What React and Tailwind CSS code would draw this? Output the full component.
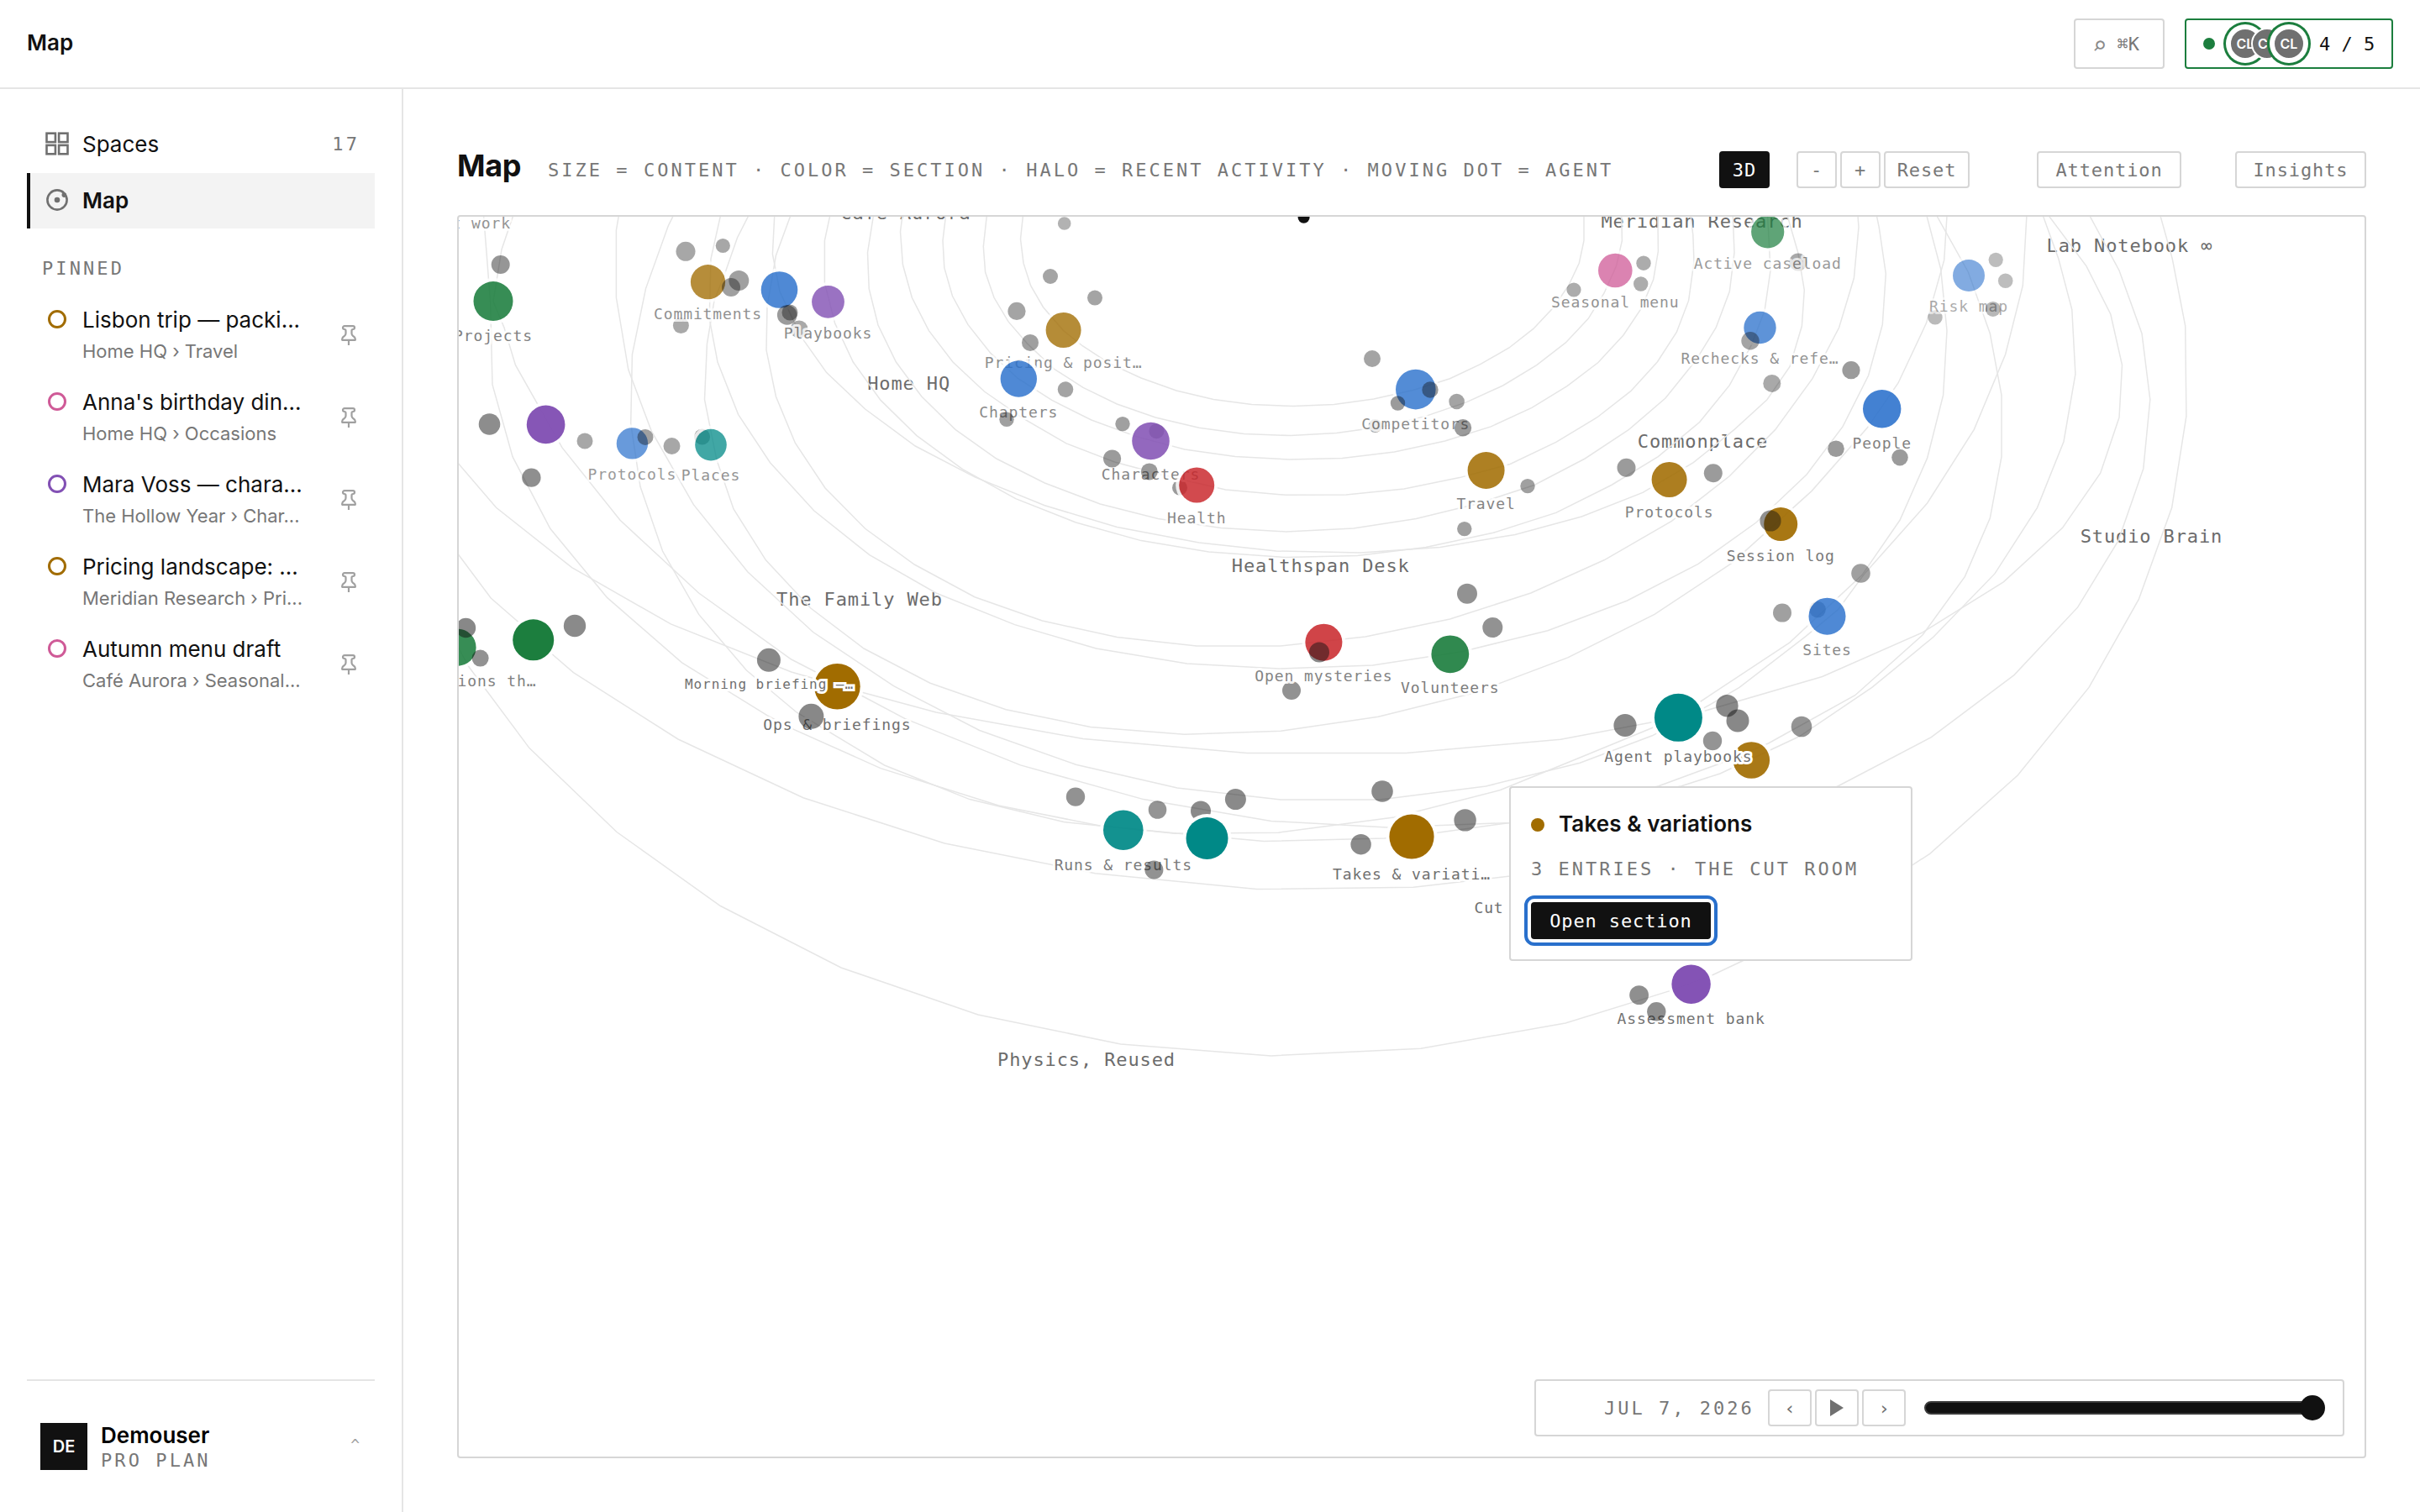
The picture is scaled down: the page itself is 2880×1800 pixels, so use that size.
import { clsx } from "clsx";

const MONO = "font-['DejaVu_Sans_Mono','Liberation_Mono',monospace]";
const SANS = "font-['Inter','Liberation_Sans',sans-serif]";

const AMBER = "#a16c00";
const PINK = "#cf5a97";
const PURPLE = "#8250b4";
const GREEN = "#1c7e3e";
const BLUE = "#2970cc";
const TEAL = "#008987";
const RED = "#c9262b";

const pinned = [
  { title: "Lisbon trip — packi...", path: "Home HQ › Travel", color: AMBER },
  { title: "Anna's birthday din...", path: "Home HQ › Occasions", color: PINK },
  { title: "Mara Voss — chara...", path: "The Hollow Year › Char...", color: PURPLE },
  { title: "Pricing landscape: ...", path: "Meridian Research › Pri...", color: AMBER },
  { title: "Autumn menu draft", path: "Café Aurora › Seasonal...", color: PINK },
];

const orbits = [
  "1217.4,257 1214.5,284.6 1218,313.2 1226.6,340 1241.5,365.7 1265.6,393.6 1288.6,412 1320.7,432.9 1358,450 1400,465 1444.2,475.4 1489.6,481.4 1539,483.6 1587.7,481.4 1634.8,475 1682.5,464.3 1725.5,450.7 1761.7,433.6 1796,414 1824.8,391.4 1849,365.7 1866.7,340 1879.3,313.2 1885,286.4 1885,257",
  "1174.3,257 1170.3,293.6 1172.6,324 1183,354.3 1200,382.9 1223,409.6 1254.7,439.3 1289,461.4 1329.3,481 1375.2,497 1427,509.3 1480.4,516.4 1536,518.6 1590.6,515.4 1645,507.9 1696.8,495.4 1745.6,478.6 1788.6,459 1828.8,434.6 1863.3,407.9 1890.2,379.3 1909,349 1923.5,316.8 1930.4,286.4 1929.8,257",
  "1125.5,257 1122,286.4 1123.8,318.6 1133.5,352.5 1151.9,386.4 1178.9,420.4 1211.6,450.7 1251.8,476.4 1298.8,500 1352.3,519.6 1409.8,535 1470,543.6 1534.3,547 1597.5,545.4 1659.5,537.9 1719.7,525 1774.3,507.9 1823,485.4 1865,459.6 1901.7,431.8 1932,399 1953.4,366.8 1967.7,332.9 1973.4,299 1972.9,257",
  "1073.9,257 1071.5,275.7 1074.4,315 1085.3,354.3 1105.4,393.6 1134,431 1171.4,466 1217.3,497.9 1269,527.9 1326.4,550 1390,567 1458.6,582.9 1530.3,589.3 1602,589 1671,582 1737,568.6 1797.2,552.5 1851.8,526.4 1900.6,497 1940.7,465.7 1972.3,431 1995.3,395.4 2009.6,357.9 2016,311.4 2014.8,279.3 2012,257",
  "1039.4,257 1032.5,300.7 1034.2,343.6 1045,387 1066.4,431 1096.8,472 1137,511.4 1185.8,546 1243.3,575 1309.3,600 1378.2,617.5 1452.8,628.6 1530.3,632.9 1610.7,629 1685.3,617.5 1757,600 1825.9,577.5 1886.2,546 1937.8,512 1982,474 2018,429.3 2042.2,390 2058.3,347 2064,300.7 2062.3,257",
  "987.7,257 981.4,286.4 981.4,336.4 993.5,384.6 1015.3,431 1048,476.4 1091,518.6 1145.6,558.6 1208.7,593.6 1280.5,622 1358,643.6 1438.5,657 1530.3,663.6 1615.3,661.4 1696.8,651.4 1777,634.3 1851.8,610.4 1917.7,577.5 1973.3,543.6 2022.7,502.5 2058.3,458.6 2084,411.4 2100,370 2107,322 2103.6,257",
  "921.7,257 919.4,302.5 928,347 953.3,400.7 983.7,443.6 1029.6,487 1089.3,531 1160,567.9 1243.3,601.8 1329.4,627.5 1427,646 1518.8,656 1619.3,657.9 1714,651.4 1803,636.4 1882.3,615 1955,586.4 2015.3,550.7 2064,511.4 2103,475.7 2130,436.4 2144.4,388 2147.3,345.4 2139.8,300.7 2127.2,257",
  "940.7,257 923.4,304.3 913,365 912,416.8 923.4,472 946.4,527.5 982,581 1029.6,629.3 1088.2,672 1160,710.7 1240.4,739 1329.4,758.6 1424,769 1523.4,769 1625,758 1725.5,737 1821.8,706 1909,666.8 1989.4,620.4 2058.3,566.8 2112.8,511.4 2157,450.7 2188.6,390 2206.4,331 2212,270.4 2211,257",
  "857.4,257 846,308 844.2,379.3 854,431 878.7,493.6 916.5,550.7 968.8,608 1034.8,660.7 1114,706 1207.6,743.6 1304.6,772 1412.5,790 1521.7,796 1633.6,792 1739.8,775.7 1842,750.7 1936.6,715 2021,671.4 2090,622 2150,565 2193,507.9 2223.6,447 2240.3,386.4 2244.3,325.7 2236.2,270.4 2233.4,257",
  "890.7,257 877.5,283 862.6,325.7 850,358 841.4,409.6 838.5,475.7 852.8,547 873,606 911.4,666.8 964.8,724 1028,772 1107,813.2 1197.2,844.7 1297.7,865.4 1409.6,874.3 1524.3,870.2 1640.3,853.2 1754,825 1865.8,782.9 1969,731.4 2061,670.4 2156,584.6 2222,509.6 2259,456 2292.5,384.6 2313.7,309.6 2317,257",
  "575.6,257 583.6,359.6 586,457.9 610,543.6 654.8,629.3 722.5,711.4 811.5,788.8 913,851.7 944.7,868.4 1048,914.6 1188.6,959 1309,983 1400,992 1504.2,1001.6 1647.7,997.9 1711,991.2 1797,979.4 1974,935.7 2044,910 2104.4,885 2207.7,827.7 2288,756 2338.4,686.4 2368.3,616.8 2382,543.6 2382,470.4 2368.3,397 2342.4,324 2305,257",
  "610.6,257 597,297 587,359 600,390 613.5,434.6 669,532.9 738,619.3 831.6,706 941.8,785 1028,829.5 1076.7,855.4 1214.5,910.9 1360.8,951.6 1512.8,977.5 1650.6,985 1797,979.4 1930,950 2001,935.7 2047,921 2141.7,876.5 2227.8,818.4 2300.7,758.5 2374,682.9 2424.5,604.3 2456,525.7 2469.9,445.4 2465.8,368.6 2449.8,307.9 2431.4,257",
  "736.3,257 733.4,274 733.4,354.3 747.8,440 775.3,513.2 825.3,600.7 890,681 967.6,752.5 1063.5,816.6 1165.7,869.5 1280.5,910.2 1401,937.9 1524.3,952 1642,952 1768.3,936 1880.2,908.3 1966.3,875.8 2030,841.7 2070,818.4 2149.2,757.4 2187.5,725.7 2219,682.9 2293.6,599 2349.3,511.4 2386.6,422 2407.3,340 2411.9,257",
  "801.2,257 795.4,268.6 768.5,343.6 752.4,422 750.7,504.3 762,579.3 788.5,656 831.6,731.4 888.4,798 948,848 1052.6,911 1154,951.6 1266,978.6 1398,992.3 1521.4,991.2 1659,973 1785.5,940.5 1880,902 1966.3,866.5 2024,835 2130,764.8 2216,684.6 2261,619.3 2293.6,545.4 2312.6,470.4 2317,393.6 2309.7,320.4 2293,257",
  "544,550 590.5,604.3 680.6,675.7 798.3,742.9 941.8,800 1028,824.7 1114,848 1289,879.5 1484,896.5 1673.6,896.5 1857.2,880.2 1966.3,859.8 2029.8,846 2168.7,805.5 2288,752.9 2384.3,692.9 2454.4,628.6 2499.7,563.2 2522,497 2525.5,434.6 2511.8,374 2483,316.8 2438.3,257",
  "544,658 584.2,712 616.3,740 659.4,780.7 682.4,800.6 807,880 956,949.8 1124.3,1004 1303.4,1039.7 1495.6,1058.5 1682,1056.3 1797,1043 2030,1000 2187.6,935.7 2298.4,877.6 2397,803.6 2472.7,722.9 2521,643.6 2550.8,557.9 2558.8,475.7 2549,397 2522,322 2487,257",
  "544,768 557,792.5 630,890.6 734,990.5 857.4,1078.5 1001,1152 1164,1208 1333.7,1243 1512.8,1256.9 1690.8,1248.3 1863,1218 1986.4,1179.9 2038,1160.7 2073.6,1144 2276.6,1029.3 2296.7,1016.4 2401.2,923 2486,818.4 2545.2,713.7 2584.7,604.3 2601.9,495.4 2600.7,388 2585.2,307.9 2571,257",
];

const spaces = [
  ["Café Aurora", 1078, 260.7],
  ["Home HQ", 1081.6, 464],
  ["The Family Web", 1023, 721],
  ["Healthspan Desk", 1571.7, 680.7],
  ["Meridian Research", 2025.5, 271],
  ["Commonplace", 2026.5, 533],
  ["Lab Notebook ∞", 2534.5, 300],
  ["Studio Brain", 2560.5, 645.7],
  ["Physics, Reused", 1293, 1268.6],
];

// x, y, radius, opacity
const backEntries = [
  [810.4, 387.5, 9.5, 0.36],
  [951, 392, 10.5, 0.36],
  [835.6, 520, 9.5, 0.36],
  [1226, 407.9, 10, 0.4],
  [1376.4, 513.2, 9, 0.4],
  [1404, 580.7, 9, 0.42],
  [1429, 965.6, 12, 0.49],
  [1537, 822, 11, 0.46],
  [1636.6, 507, 8, 0.38],
  [2140, 312, 10.6, 0.36],
  [2303, 377.9, 8.7, 0.29],
  [2163, 725.5, 9.8, 0.4],
];

const sections = [
  { x: 2343, y: 328, r: 19, o: 0.58, c: BLUE, label: "Risk map" },
  { x: 2103.7, y: 276, r: 19.6, o: 0.7, c: GREEN, label: "Active caseload" },
  { x: 752.4, y: 527.9, r: 18.7, o: 0.7, c: BLUE, label: "Protocols" },
  { x: 846, y: 529.6, r: 18.8, o: 0.74, c: TEAL, label: "Places" },
  { x: 1922.3, y: 322, r: 20.3, o: 0.75, c: PINK, label: "Seasonal menu" },
  { x: 2094.5, y: 390, r: 19.2, o: 0.75, c: BLUE, label: "Rechecks & refe…" },
  { x: 842.5, y: 335.7, r: 20.6, o: 0.77, c: AMBER, label: "Commitments" },
  { x: 985.5, y: 359.3, r: 19.4, o: 0.8, c: PURPLE, label: "Playbooks" },
  { x: 927.5, y: 345, r: 21.8, o: 0.82, c: BLUE },
  { x: 1265.6, y: 393, r: 21, o: 0.78, c: AMBER, label: "Pricing & posit…" },
  { x: 1212.3, y: 451, r: 21.7, o: 0.82, c: BLUE, label: "Chapters" },
  { x: 1684.8, y: 463.6, r: 23.8, o: 0.8, c: BLUE, label: "Competitors" },
  { x: 1369.5, y: 525, r: 22.3, o: 0.86, c: PURPLE, label: "Characters" },
  { x: 1424.2, y: 577.5, r: 21, o: 0.83, c: RED, label: "Health" },
  { x: 1768.6, y: 560, r: 22, o: 0.86, c: AMBER, label: "Travel" },
  { x: 587, y: 358.6, r: 23.5, o: 0.88, c: GREEN, label: "Projects" },
  { x: 544.6, y: 770.7, r: 22, o: 0.88, c: GREEN, label: "Instructions th…" },
  { x: 2174.5, y: 733.7, r: 22, o: 0.82, c: BLUE, label: "Sites" },
  { x: 1986.6, y: 571, r: 21, o: 0.87, c: AMBER, label: "Protocols" },
  { x: 1575.4, y: 764.7, r: 22, o: 0.86, c: RED, label: "Open mysteries" },
  { x: 2239.7, y: 486.8, r: 22.7, o: 0.88, c: BLUE, label: "People" },
  { x: 1725.8, y: 778.8, r: 22.4, o: 0.91, c: GREEN, label: "Volunteers" },
  { x: 2119.2, y: 624, r: 20, o: 0.92, c: AMBER, label: "Session log" },
  { x: 1336.8, y: 988.2, r: 23.8, o: 0.92, c: TEAL, label: "Runs & results" },
  { x: 2084.3, y: 905, r: 21.8, o: 0.91, c: AMBER },
  { x: 649.6, y: 505.4, r: 22.8, o: 0.96, c: PURPLE },
  { x: 2012.6, y: 1171.7, r: 23.2, o: 0.98, c: PURPLE, label: "Assessment bank" },
  { x: 634.7, y: 761.8, r: 24.5, o: 1, c: GREEN },
  { x: 1436.5, y: 998, r: 25, o: 1, c: TEAL },
  { x: 1680, y: 996, r: 26.6, o: 1, c: AMBER, label: "Takes & variati…" },
  { x: 996.4, y: 817.3, r: 27.3, o: 1, c: AMBER, label: "Ops & briefings" },
  { x: 1997.4, y: 854.3, r: 28.5, o: 1, c: TEAL, label: "Agent playbooks" },
];

const frontEntries = [
  [595.7, 315, 11, 0.44],
  [816, 299.3, 11.5, 0.37],
  [860.3, 292.5, 8.6, 0.37],
  [879.3, 334, 12, 0.4],
  [870, 342, 11, 0.4],
  [936.7, 375, 11.8, 0.42],
  [940, 372, 9.5, 0.42],
  [582.5, 505, 12.8, 0.48],
  [632.4, 568.6, 11.2, 0.47],
  [696, 525, 9.5, 0.37],
  [768, 520.4, 9.5, 0.4],
  [799.5, 531, 10, 0.37],
  [1250, 329, 9, 0.38],
  [1303, 354.6, 9, 0.38],
  [1266.7, 266, 7.8, 0.32],
  [1210, 370.4, 10.6, 0.38],
  [1268, 463.6, 9.3, 0.38],
  [1198, 499.3, 8.7, 0.4],
  [1336, 504.6, 8.7, 0.4],
  [1323.6, 546, 10.6, 0.42],
  [1367.8, 561.4, 10, 0.42],
  [554.4, 747.5, 11.8, 0.5],
  [571.6, 783.6, 10, 0.46],
  [684, 745, 13.2, 0.49],
  [914.9, 785.8, 14, 0.5],
  [965.4, 852.8, 15, 0.5],
  [1280, 948.6, 11.2, 0.46],
  [1377.5, 964, 10.8, 0.45],
  [1470.4, 951.6, 12.5, 0.49],
  [1373.4, 1035.5, 11, 0.46],
  [1570, 776.6, 12, 0.5],
  [1746, 706.7, 12, 0.46],
  [1776.3, 747, 12, 0.46],
  [1645, 942, 12.8, 0.49],
  [1743.6, 976.4, 13.2, 0.49],
  [1619.6, 1005.2, 12.2, 0.49],
  [1934, 863.5, 13.6, 0.5],
  [2055.4, 840.2, 13.2, 0.5],
  [2068, 858, 13.5, 0.5],
  [2038, 882, 11.2, 0.45],
  [2144, 865, 12.3, 0.45],
  [2121, 729.6, 11, 0.4],
  [2214.5, 682.5, 11.3, 0.4],
  [1950.6, 1184.6, 11.4, 0.47],
  [1971.3, 1204.3, 11.2, 0.47],
  [1633, 427, 10, 0.38],
  [1702, 464, 9.7, 0.42],
  [1663.5, 480, 8.7, 0.42],
  [1733.6, 478, 9.3, 0.38],
  [1741, 509.3, 10.2, 0.42],
  [1818, 578.6, 8.7, 0.4],
  [1742.8, 629.6, 8.7, 0.4],
  [1935.5, 556.8, 11, 0.42],
  [2038.8, 563.2, 11, 0.42],
  [1956, 313.2, 8.7, 0.35],
  [1952.7, 338, 8.7, 0.35],
  [1873, 345, 8.6, 0.35],
  [2083, 405.7, 10.7, 0.38],
  [2108.8, 456.4, 10.5, 0.36],
  [2203, 440.7, 10.6, 0.42],
  [2375.2, 309.3, 8.6, 0.28],
  [2386.7, 334.3, 8.8, 0.28],
  [2371.8, 367.9, 9, 0.3],
  [2185, 534.3, 9.8, 0.42],
  [2261, 544.6, 9.8, 0.42],
  [2107, 620, 12.6, 0.46],
];

function GridIcon() {
  return (
    <svg className="size-7" viewBox="0 0 28 28" fill="none" stroke="#707070" strokeWidth="2.6">
      <rect x="1.5" y="1.7" width="10.4" height="10.4" />
      <rect x="16.1" y="1.7" width="10.4" height="10.4" />
      <rect x="1.5" y="15.9" width="10.4" height="10.4" />
      <rect x="16.1" y="15.9" width="10.4" height="10.4" />
    </svg>
  );
}

function MapIcon() {
  return (
    <svg className="size-7" viewBox="0 0 28 28" fill="none">
      <circle cx="14" cy="13" r="11.6" stroke="#707070" strokeWidth="2.6" />
      <circle cx="14" cy="13" r="3.3" fill="#707070" />
      <circle cx="22.3" cy="7.1" r="2.8" fill="#707070" />
    </svg>
  );
}

function PinIcon() {
  return (
    <svg className="h-6 w-[18px] shrink-0" viewBox="0 0 18 24" fill="none" stroke="#a0a0a0" strokeWidth="2.2" strokeLinejoin="round">
      <path d="M4 1.2h10c1.2 0 2 .8 2 1.9S15.200 5 14.200 5c-1.500 0-1.700.7-1.700 1.700V10c0 1.400.5 2.200 1.700 3 1.500.9 2.600 2 2.600 3.600v1.200H1.200v-1.200c0-1.600 1.100-2.700 2.600-3.600 1.200-.8 1.700-1.600 1.700-3V6.700C5.500 5.700 5.300 5 3.800 5 2.800 5 2 4.200 2 3.100S2.800 1.200 4 1.200z" />
      <path d="M9 18v6" />
    </svg>
  );
}

function Header() {
  return (
    <header className="flex h-[106px] shrink-0 items-center justify-between border-b-2 border-[#e5e5e5] px-8">
      <div className="-mt-0.5 text-[26px] font-semibold leading-8 text-[#111]">Map</div>
      <div className="flex gap-6">
        <div className={clsx(MONO, "flex h-[60px] w-[108px] items-center justify-center rounded border-2 border-[#d6d6d6] text-[22px] text-[#777]")}>
          <span className="mt-1 -ml-2 mr-3 text-[29px] leading-8 text-[#8a8a8a]">⌕</span>
          ⌘K
        </div>
        <div className="flex h-[60px] w-[248px] items-center rounded border-2 border-[#1c7e3e] pl-5">
          <span className="size-3.5 rounded-full bg-[#1c7e3e]" />
          <div className="ml-[17px] flex">
            {[true, false, true].map((active, i) => (
              <span
                key={i}
                className={clsx(
                  "relative flex size-[38px] items-center justify-center rounded-full border-2 border-white bg-[#707070] text-[16px] font-semibold text-white",
                  i > 0 && "-ml-3",
                  active && "shadow-[0_0_0_4px_#fff,0_0_0_7px_#1c7e3e]"
                )}
              >
                {i === 1 ? <span className="-ml-2.5">C</span> : "CL"}
              </span>
            ))}
          </div>
          <span className={clsx(MONO, "ml-[17px] text-[22px] text-[#111]")}>4 / 5</span>
        </div>
      </div>
    </header>
  );
}

function Sidebar() {
  return (
    <aside className="flex w-[480px] shrink-0 flex-col border-r-2 border-[#e5e5e5] px-8 pt-8">
      <nav className="flex flex-col gap-0.5">
        <div className="flex h-[66px] items-center border-l-4 border-transparent pl-[18px] text-[26px] text-[#111]">
          <GridIcon />
          <span className="ml-4">Spaces</span>
          <span className={clsx(MONO, "mr-[18px] ml-auto text-[22px] tracking-[0.14em] text-[#777]")}>17</span>
        </div>
        <div className="flex h-[66px] items-center border-l-4 border-[#111] bg-[#f3f3f3] pl-[18px] text-[26px] font-semibold text-[#111]">
          <MapIcon />
          <span className="-mt-0.5 ml-4">Map</span>
        </div>
      </nav>
      <div className={clsx(MONO, "mt-8 pl-[18px] text-[22px] leading-8 tracking-[0.14em] text-[#777]")}>PINNED</div>
      <ul className="mt-[18px]">
        {pinned.map((item) => (
          <li key={item.title} className="flex h-[98px] items-start pl-[25px]">
            <span className="mt-[15px] size-[22px] shrink-0 rounded-full border-[3px]" style={{ borderColor: item.color }} />
            <div className="ml-[19px] w-[280px] whitespace-nowrap">
              <div className="mt-px text-[26px] leading-[52px] text-[#111]">{item.title}</div>
              <div className="-mt-[5px] text-[22px] leading-8 text-[#777]">{item.path}</div>
            </div>
            <div className="mt-[33px] ml-7">
              <PinIcon />
            </div>
          </li>
        ))}
      </ul>
      <div className="mt-auto flex h-[158px] items-start border-t-2 border-[#e5e5e5] pt-[50px] pl-4">
        <div className="flex size-14 items-center justify-center bg-[#111] text-[20px] font-semibold text-white">DE</div>
        <div className="ml-4">
          <div className="text-[26px] font-semibold leading-[30px] text-black">Demouser</div>
          <div className={clsx(MONO, "mt-px text-[22px] leading-7 tracking-[0.14em] text-[#777]")}>PRO PLAN</div>
        </div>
        <span className={clsx(MONO, "mt-3 mr-[18px] ml-auto text-[18px] text-[#a0a0a0]")}>^</span>
      </div>
    </aside>
  );
}

function ToolButton({ children, className }) {
  return (
    <button className={clsx(MONO, "flex h-11 items-center justify-center rounded border-2 text-[22px] tracking-[0.88px]", className)}>
      {children}
    </button>
  );
}

function Toolbar() {
  const idle = "border-[#d6d6d6] text-[#777]";
  return (
    <div className="flex h-11 items-center">
      <h1 className="-mt-2.5 text-[36px] font-bold leading-10 tracking-[-0.01em] text-[#111]">Map</h1>
      <p className={clsx(MONO, "ml-8 text-[22px] whitespace-nowrap tracking-[0.137em] text-[#777]")}>
        SIZE = CONTENT · COLOR = SECTION · HALO = RECENT ACTIVITY · MOVING DOT = AGENT
      </p>
      <div className="ml-auto flex">
        <ToolButton className="w-[60px] border-[#111] bg-[#111] text-white">3D</ToolButton>
        <div className="ml-8 flex gap-1">
          <ToolButton className={clsx(idle, "w-12")}>-</ToolButton>
          <ToolButton className={clsx(idle, "w-12")}>+</ToolButton>
          <ToolButton className={clsx(idle, "w-[102px]")}>Reset</ToolButton>
        </div>
        <ToolButton className={clsx(idle, "ml-20 w-[172px]")}>Attention</ToolButton>
        <ToolButton className={clsx(idle, "ml-16 w-[156px]")}>Insights</ToolButton>
      </div>
    </div>
  );
}

function Entry({ data }) {
  const [x, y, r, o] = data;
  return <circle cx={x} cy={y} r={r} fill="#111" opacity={o} />;
}

function NodeLabel({ x, y, opacity, children }) {
  return (
    <text
      x={x}
      y={y}
      opacity={opacity}
      textAnchor="middle"
      fill="#707070"
      stroke="#fff"
      strokeWidth="6"
      strokeLinejoin="round"
      paintOrder="stroke"
      className="text-[18px] tracking-[0.9px]"
    >
      {children}
    </text>
  );
}

function Section({ node }) {
  return (
    <g>
      <g opacity={node.o}>
        <circle cx={node.x} cy={node.y} r={node.r + 4} fill="#fff" />
        <circle cx={node.x} cy={node.y} r={node.r} fill={node.c} />
      </g>
      {node.label && (
        <NodeLabel x={node.x} y={node.y + node.r + 24} opacity={node.o}>
          {node.label}
        </NodeLabel>
      )}
    </g>
  );
}

function OrbitMap() {
  return (
    <svg className={clsx(MONO, "block h-full w-full")} viewBox="546 258 2268 1476">
      <g fill="#6c6c6c" className="text-[22px] tracking-[0.88px]">
        {spaces.map(([name, x, y]) => (
          <text key={name} x={x} y={y} textAnchor="middle">
            {name}
          </text>
        ))}
      </g>
      <g fill="none" stroke="#e6e6e6" strokeWidth="1.5">
        {orbits.map((points, i) => (
          <polyline key={i} points={points} />
        ))}
      </g>
      <circle cx="1551.6" cy="258.7" r="7" fill="#111" />
      <NodeLabel x={543.5} y={271.8} opacity={0.75}>Client work</NodeLabel>
      {backEntries.map((e, i) => (
        <Entry key={i} data={e} />
      ))}
      {sections.map((node, i) => (
        <Section key={i} node={node} />
      ))}
      <NodeLabel x={1772} y={1087} opacity={1}>Cut</NodeLabel>
      {frontEntries.map((e, i) => (
        <Entry key={i} data={e} />
      ))}
      <text
        x="915.5"
        y="820"
        textAnchor="middle"
        fill="#707070"
        stroke="#fff"
        strokeWidth="6"
        paintOrder="stroke"
        className="text-[16px] tracking-[0.95px]"
      >
        Morning briefing —…
      </text>
    </svg>
  );
}

function SectionPopup() {
  return (
    <div className="absolute top-[678px] left-[1250px] h-[208px] w-[480px] rounded border-2 border-[#d6d6d6] bg-white px-6 pt-7">
      <div className="flex items-center">
        <span className="size-4 rounded-full bg-[#a16c00]" />
        <span className="-mt-px ml-[17px] text-[26px] font-semibold leading-8 tracking-[0.1px] text-[#111]">Takes & variations</span>
      </div>
      <div className={clsx(MONO, "mt-[22px] text-[22px] leading-8 whitespace-nowrap tracking-[0.137em] text-[#777]")}>
        3 ENTRIES · THE CUT ROOM
      </div>
      <button className={clsx(MONO, "mt-[23px] flex h-11 w-[214px] items-center justify-center rounded bg-[#111] text-[22px] tracking-[0.88px] text-white outline-4 outline-offset-4 outline-[#2970cc]")}>
        Open section
      </button>
    </div>
  );
}

function Timeline() {
  const step = clsx(MONO, "flex h-11 w-[52px] items-center justify-center rounded border-2 border-[#d6d6d6] text-[22px] text-[#707070]");
  return (
    <div className="absolute right-6 bottom-6 flex h-[68px] w-[964px] items-center rounded border-2 border-[#d6d6d6] bg-white pr-[22px]">
      <span className={clsx(MONO, "ml-[81px] w-[179px] text-[22px] whitespace-nowrap tracking-[0.137em] text-[#777]")}>JUL 7, 2026</span>
      <div className="ml-4 flex gap-1">
        <button className={step}>‹</button>
        <button className={step}>
          <svg className="h-5 w-4" viewBox="0 0 16 20">
            <path d="M0 0l16 10L0 20z" fill="#707070" />
          </svg>
        </button>
        <button className={step}>›</button>
      </div>
      <div className="ml-[22px] flex h-4 flex-1 items-center justify-end rounded-full border-2 border-[#3a3a3a] bg-[#111]">
        <span className="-mr-[3px] size-[30px] shrink-0 rounded-full bg-[#111]" />
      </div>
    </div>
  );
}

export default function App() {
  return (
    <div className={clsx(SANS, "flex h-screen w-screen flex-col overflow-hidden bg-white")}>
      <Header />
      <div className="flex min-h-0 flex-1">
        <Sidebar />
        <main className="flex min-w-0 flex-1 flex-col px-16 pt-[74px] pb-16">
          <Toolbar />
          <div className="relative mt-8 min-h-0 flex-1 overflow-hidden rounded border-2 border-[#d6d6d6]">
            <OrbitMap />
            <SectionPopup />
            <Timeline />
          </div>
        </main>
      </div>
    </div>
  );
}
